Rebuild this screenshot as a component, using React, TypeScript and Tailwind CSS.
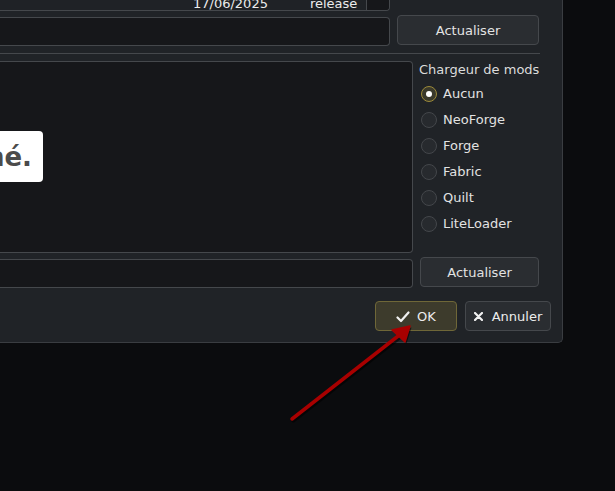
import React from "react";

const font = { fontFamily: '"DejaVu Sans", Verdana, sans-serif' };

function Radio({ label, checked }: { label: string; checked?: boolean }) {
  return (
    <div className="h-[26px] flex items-center pl-[2px] gap-[6px]">
      <div
        className={
          checked
            ? "w-[16px] h-[16px] rounded-full border-[1.5px] border-[#9c8a3a] bg-[#3a392b] flex items-center justify-center"
            : "w-[16px] h-[16px] rounded-full border border-[#44474b] bg-[#272a2e]"
        }
      >
        {checked && <div className="w-[6px] h-[6px] rounded-full bg-white" />}
      </div>
      <span className="text-[13px] leading-[16px] text-[#e2e2e2]">{label}</span>
    </div>
  );
}

export default function App() {
  return (
    <div className="relative w-[615px] h-[491px] overflow-hidden bg-[#0b0c0e]" style={font}>
      <div className="w-[563px] bg-[#202327] border-r border-b border-[#3a3d41] rounded-br-[5px] flex flex-col pb-[11px]">
        <div className="w-[539px] flex flex-col">
          {/* table */}
          <div className="-mt-[20px] h-[31px] w-[390px] flex border-b border-r border-[#45484c] rounded-br-[4px] overflow-hidden">
            <div className="w-[367px] h-full bg-[#1f2226] border-r border-[#45484c] flex items-start pt-[16px] text-[13px] leading-[16px] text-[#ececec]">
              <span className="ml-[193px] whitespace-nowrap">17/06/2025</span>
              <span className="ml-[42px] whitespace-nowrap">release</span>
            </div>
            <div className="flex-1 bg-[#16171a]" />
          </div>
          {/* top input row */}
          <div className="mt-[4px] flex items-start gap-[7px]">
            <div className="mt-[2px] w-[390px] h-[29px] bg-[#16171a] border border-l-0 border-[#45484c] rounded-r-[4px]" />
            <button className="w-[142px] h-[30px] pt-[1px] bg-[#2a2d31] border border-[#45484c] rounded-[4px] text-[13px] text-[#e2e2e2] flex items-center justify-center">
              Actualiser
            </button>
          </div>
          <div className="mt-[7px] h-px w-[540px] bg-[#45484c]" />
          {/* lower section */}
          <div className="mt-[7px] flex gap-[6px]">
            <div className="w-[413px] h-[192px] bg-[#16171a] border border-l-0 border-[#45484c] rounded-r-[4px]" />
            <div className="w-[120px] flex flex-col pt-[1px]">
              <div className="text-[13px] leading-[16px] text-[#dcdcdc] whitespace-nowrap">Chargeur de mods</div>
              <div className="mt-[3px] flex flex-col">
                <Radio label="Aucun" checked />
                <Radio label="NeoForge" />
                <Radio label="Forge" />
                <Radio label="Fabric" />
                <Radio label="Quilt" />
                <Radio label="LiteLoader" />
              </div>
            </div>
          </div>
          <div className="mt-[4px] flex items-start gap-[7px]">
            <div className="mt-[2px] w-[413px] h-[29px] bg-[#16171a] border border-l-0 border-[#45484c] rounded-r-[4px]" />
            <button className="w-[119px] h-[30px] pt-[1px] bg-[#2a2d31] border border-[#45484c] rounded-[4px] text-[13px] text-[#e2e2e2] flex items-center justify-center">
              Actualiser
            </button>
          </div>
        </div>
        {/* OK / Cancel */}
        <div className="mt-[13px] flex justify-end gap-[8px] pr-[11px]">
          <button className="w-[82px] h-[30px] pt-[1px] bg-[#3d3b2c] border border-[#6f6738] rounded-[4px] text-[13px] text-[#ececec] flex items-center justify-center gap-[7px]">
            <svg width="14" height="12" viewBox="0 0 14 12">
              <polyline points="1.5,6.5 5,10 12.5,1.5" fill="none" stroke="#f0f0f0" strokeWidth="2.2" strokeLinecap="round" strokeLinejoin="round" />
            </svg>
            <span>OK</span>
          </button>
          <button className="w-[86px] h-[30px] pt-[1px] bg-[#2a2d31] border border-[#45484c] rounded-[4px] text-[13px] text-[#ececec] flex items-center justify-center gap-[9px]">
            <svg width="9" height="9" viewBox="0 0 9 9">
              <path d="M1 1 L8 8 M8 1 L1 8" stroke="#f0f0f0" strokeWidth="2.2" strokeLinecap="round" />
            </svg>
            <span>Annuler</span>
          </button>
        </div>
      </div>

      {/* white tooltip-like box */}
      <div className="absolute right-[572px] top-[131px] h-[51px] pt-[1px] bg-white rounded-[4px] flex items-center pl-[12px] pr-[11px] whitespace-nowrap">
        <span className="text-[26px] font-bold text-[#4b4b4b]" style={{ fontFamily: '"DejaVu Sans", sans-serif' }}>
          Aucune version sélectionné.
        </span>
      </div>

      {/* red arrow */}
      <svg className="absolute left-0 top-0 pointer-events-none" width="615" height="491" viewBox="0 0 615 491">
        <g opacity="0.55" transform="translate(1.5,1.5)">
          <line x1="292" y1="419" x2="402" y2="333" stroke="#000" strokeWidth="4" strokeLinecap="round" />
          <polygon points="410,326 392,330 405,342" fill="#000" />
        </g>
        <line x1="292" y1="419" x2="402" y2="333" stroke="#a80000" strokeWidth="3.5" strokeLinecap="round" />
        <polygon points="410,326 392,330 405,342" fill="#a80000" stroke="#a80000" strokeWidth="1.5" strokeLinejoin="round" />
      </svg>
    </div>
  );
}
